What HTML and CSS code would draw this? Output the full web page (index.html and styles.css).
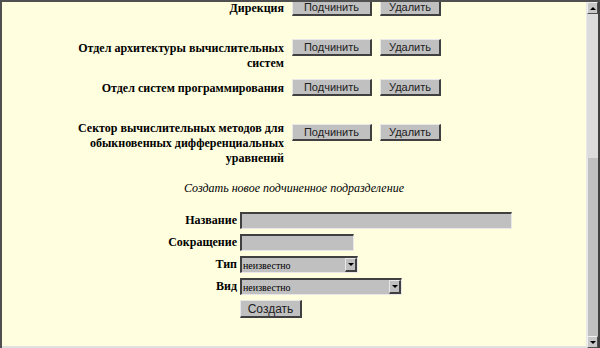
FILE: index.html
```html
<!DOCTYPE html>
<html>
<head>
    <title>Подразделения</title>
    <link rel="stylesheet" href="styles.css">
</head>
<body>
    <div class="window">
        <div class="view">
            <div class="units">
                <div class="unit">
                    <div class="unit-name">Дирекция</div>
                    <div class="actions">
                        <button class="btn btn-sub">Подчинить</button>
                        <button class="btn btn-del">Удалить</button>
                    </div>
                </div>
                <div class="unit">
                    <div class="unit-name">Отдел архитектуры вычислительных систем</div>
                    <div class="actions">
                        <button class="btn btn-sub">Подчинить</button>
                        <button class="btn btn-del">Удалить</button>
                    </div>
                </div>
                <div class="unit">
                    <div class="unit-name">Отдел систем программирования</div>
                    <div class="actions">
                        <button class="btn btn-sub">Подчинить</button>
                        <button class="btn btn-del">Удалить</button>
                    </div>
                </div>
                <div class="unit unit-tall">
                    <div class="unit-name">Сектор вычислительных методов для обыкновенных дифференциальных уравнений</div>
                    <div class="actions">
                        <button class="btn btn-sub">Подчинить</button>
                        <button class="btn btn-del">Удалить</button>
                    </div>
                </div>
            </div>

            <p class="hint">Создать новое подчиненное подразделение</p>

            <form class="create" onsubmit="return false">
                <label class="lbl">Название</label>
                <div><input type="text" class="field field-name"></div>

                <label class="lbl">Сокращение</label>
                <div><input type="text" class="field field-short"></div>

                <label class="lbl">Тип</label>
                <div class="select select-type">
                    <select><option>неизвестно</option></select>
                    <span class="drop"></span>
                </div>

                <label class="lbl">Вид</label>
                <div class="select select-kind">
                    <select><option>неизвестно</option></select>
                    <span class="drop"></span>
                </div>

                <span></span>
                <div><button class="btn btn-create">Создать</button></div>
            </form>
        </div>

        <div class="scrollbar">
            <div class="sb-btn"><span class="arrow-up"></span></div>
            <div class="sb-track"></div>
            <div class="sb-thumb"></div>
            <div class="sb-btn"><span class="arrow-down"></span></div>
        </div>
    </div>
</body>
</html>
```

FILE: styles.css
```css
body {
    margin: 0;
    font-family: 'Liberation Serif', serif;
    font-size: 12px;
    color: #000;
}
.window {
    width: 600px;
    height: 348px;
    box-sizing: border-box;
    border-top: 2px solid #505050;
    border-left: 2px solid #505050;
    display: flex;
    overflow: hidden;
}
.view {
    flex: 1;
    background: #ffffe0;
    border-bottom: 2px solid #e0e0e0;
    overflow: hidden;
}

/* список подразделений */
.units {
    margin-top: -2px;
    padding-left: 71px;
}
.unit {
    display: flex;
    align-items: flex-start;
    min-height: 40px;
}
.unit-name {
    width: 211px;
    text-align: right;
    font-weight: bold;
    line-height: 15px;
    padding-top: 1px;
}
.actions {
    display: flex;
    gap: 8px;
    margin-left: 8px;
    margin-top: -1px;
}
.unit-tall .actions {
    margin-top: 4px;
}
.btn {
    font-family: 'Liberation Sans', sans-serif;
    font-size: 11px;
    color: #202020;
    background: #c0c0c0;
    border-style: solid;
    border-width: 1px 2px 2px 1px;
    border-color: #e8e8e8 #404040 #404040 #e8e8e8;
    height: 17px;
    padding: 0;
    box-sizing: border-box;
}
.btn-sub { width: 80px; }
.btn-del { width: 61px; }

.hint {
    margin: 15px 0 0;
    text-align: center;
    font-style: italic;
    line-height: 15px;
}

/* форма создания */
.create {
    display: grid;
    grid-template-columns: 100px auto;
    column-gap: 3px;
    row-gap: 5px;
    margin: 16px 0 0 135px;
    align-items: center;
}
.lbl {
    text-align: right;
    font-weight: bold;
}
.field {
    display: block;
    height: 17px;
    box-sizing: border-box;
    background: #c0c0c0;
    border-style: solid;
    border-width: 2px 1px 1px 2px;
    border-color: #404040 #e8e8e8 #e8e8e8 #404040;
    padding: 0 2px;
}
.field-name { width: 272px; }
.field-short { width: 114px; }

.select {
    position: relative;
    height: 17px;
    box-sizing: border-box;
    background: #c0c0c0;
    border-style: solid;
    border-width: 2px 1px 1px 2px;
    border-color: #404040 #e8e8e8 #e8e8e8 #404040;
}
.select-type { width: 118px; }
.select-kind { width: 162px; }
.select select {
    appearance: none;
    border: none;
    background: transparent;
    font-family: 'Liberation Serif', serif;
    font-size: 10px;
    height: 14px;
    width: 100%;
    padding: 0 0 0 1px;
    margin: 0;
    display: block;
}
.drop {
    position: absolute;
    top: 0;
    right: 0;
    width: 12px;
    height: 14px;
    box-sizing: border-box;
    background: #c0c0c0;
    border-style: solid;
    border-width: 1px 2px 2px 1px;
    border-color: #e8e8e8 #404040 #404040 #e8e8e8;
}
.drop::after {
    content: '';
    position: absolute;
    left: 2px;
    top: 4px;
    border-left: 3px solid transparent;
    border-right: 3px solid transparent;
    border-top: 3px solid #000;
}
.btn-create {
    width: 62px;
    height: 18px;
    font-size: 12px;
}

/* полоса прокрутки */
.scrollbar {
    width: 14px;
    box-sizing: border-box;
    border-left: 1px solid #e8e8e8;
    border-right: 2px solid #404040;
    display: flex;
    flex-direction: column;
    background: #d8d8d8;
}
.sb-btn {
    height: 12px;
    box-sizing: border-box;
    background: #c8c8c8;
    border-style: solid;
    border-width: 1px 1px 1px 1px;
    border-color: #f0f0f0 #505050 #505050 #f0f0f0;
    display: flex;
    align-items: center;
    justify-content: center;
}
.arrow-up {
    border-left: 3px solid transparent;
    border-right: 3px solid transparent;
    border-bottom: 3px solid #000;
}
.arrow-down {
    border-left: 3px solid transparent;
    border-right: 3px solid transparent;
    border-top: 3px solid #000;
}
.sb-track {
    height: 144px;
    background: #dcdcdc;
}
.sb-thumb {
    flex: 1;
    background: #c0c0c0;
    border-left: 1px solid #e8e8e8;
}
```
